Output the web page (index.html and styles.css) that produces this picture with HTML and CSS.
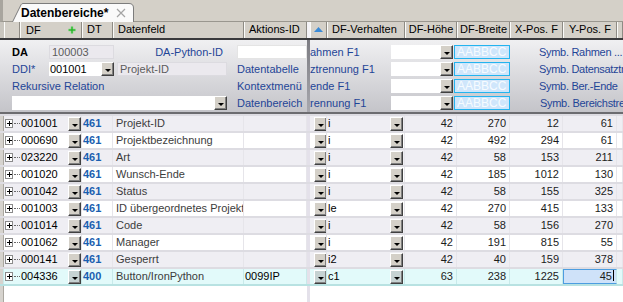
FILE: index.html
```html
<!DOCTYPE html>
<html>
  <head>
    <title>Datenbereiche</title>
    <link rel="stylesheet" href="styles.css">
  </head>
  <body>
    <div class="tabbar">
      <div class="tab">
        <svg class="tab-shape" width="123" height="19" viewBox="0 0 123 19">
          <path d="M0.5 19 L9 1.8 Q9.6 0.5 11 0.5 L117 0.5 Q121.5 0.5 121.5 5 L121.5 19" fill="#fafafa" stroke="#7c7c7c"/>
        </svg>
        <span class="tab-title">Datenbereiche*</span>
        <svg class="tab-close" width="10" height="10" viewBox="0 0 10 10">
          <path d="M1 1 L9 9 M9 1 L1 9" stroke="#a4a4a4" stroke-width="1.2"/>
        </svg>
      </div>
    </div>

    <div class="ghead">
      <div class="h gut"></div>
      <div class="h"></div>
      <div class="h hdf"><span class="htxt">DF</span><svg class="plus" width="8" height="8" viewBox="0 0 8 8"><path d="M3 0.5 H5 V3 H7.5 V5 H5 V7.5 H3 V5 H0.5 V3 H3 Z" fill="#2fb52f" stroke="#8fd88f" stroke-width="0.6"/></svg></div>
      <div class="h hpad">DT</div>
      <div class="h hpad">Datenfeld</div>
      <div class="h hpad">Aktions-ID</div>
      <div class="h split"></div>
      <div class="h sort">
        <svg width="9" height="5" viewBox="0 0 9 5"><path d="M0 5 L4.5 0 L9 5 Z" fill="#3a8ad6"/></svg>
      </div>
      <div class="h hpad">DF-Verhalten</div>
      <div class="h hc">DF-Höhe</div>
      <div class="h hc">DF-Breite</div>
      <div class="h hc">X-Pos. F</div>
      <div class="h hc">Y-Pos. F</div>
      <div class="h"></div>
    </div>

    <div class="form">
      <div class="fl">
        <div class="lbl bold c2">DA</div>
        <div class="box c3">100003</div>
        <div class="lbl blue c5 right">DA-Python-ID</div>
        <div class="inp c7"></div>

        <div class="lbl blue c2">DDI*</div>
        <div class="combo c3"><span class="val dark">001001</span><i class="dd"></i></div>
        <div class="box c5">Projekt-ID</div>
        <div class="lbl blue c7">Datentabelle</div>

        <div class="lbl blue c2-5">Rekursive Relation</div>
        <div class="lbl blue c7">Kontextmenü</div>

        <div class="combo c2-5"><span class="val"></span><i class="dd"></i></div>
        <div class="lbl blue c7">Datenbereich</div>
      </div>
      <div class="fsplit"></div>
      <div class="fr">
        <div class="lbl blue">ahmen F1</div>
        <div class="combo"><span class="val"></span><i class="dd"></i></div>
        <div class="color">AABBCC</div>
        <div class="lbl blue sym">Symb. Rahmen ...</div>

        <div class="lbl blue">ztrennung F1</div>
        <div class="combo"><span class="val"></span><i class="dd"></i></div>
        <div class="color">AABBCC</div>
        <div class="lbl blue sym">Symb. Datensatztrennung</div>

        <div class="lbl blue">ende F1</div>
        <div class="combo"><span class="val"></span><i class="dd"></i></div>
        <div class="color">AABBCC</div>
        <div class="lbl blue sym">Symb. Ber.-Ende</div>

        <div class="lbl blue shift">trennung F1</div>
        <div class="combo"><span class="val"></span><i class="dd"></i></div>
        <div class="color">AABBCC</div>
        <div class="lbl blue sym sym4">Symb. Bereichstrennung</div>
      </div>
    </div>

    <div class="rows">
      <div class="row odd">
        <div class="c gut"></div><div class="c tree"><span class="exp"></span></div>
        <div class="c df">001001</div><div class="c bc"><i class="dd"></i></div>
        <div class="c dt">461</div><div class="c name">Projekt-ID</div><div class="c act"></div>
        <div class="c split"></div><div class="c bc2"><i class="dd"></i></div>
        <div class="c verh"><span>i</span><i class="dd"></i></div>
        <div class="c num">42</div><div class="c num">270</div><div class="c num">12</div><div class="c num">61</div><div class="c"></div>
      </div>
      <div class="row">
        <div class="c gut"></div><div class="c tree"><span class="exp"></span></div>
        <div class="c df">000690</div><div class="c bc"><i class="dd"></i></div>
        <div class="c dt">461</div><div class="c name">Projektbezeichnung</div><div class="c act"></div>
        <div class="c split"></div><div class="c bc2"><i class="dd"></i></div>
        <div class="c verh"><span>i</span><i class="dd"></i></div>
        <div class="c num">42</div><div class="c num">492</div><div class="c num">294</div><div class="c num">61</div><div class="c"></div>
      </div>
      <div class="row odd">
        <div class="c gut"></div><div class="c tree"><span class="exp"></span></div>
        <div class="c df">023220</div><div class="c bc"><i class="dd"></i></div>
        <div class="c dt">461</div><div class="c name">Art</div><div class="c act"></div>
        <div class="c split"></div><div class="c bc2"><i class="dd"></i></div>
        <div class="c verh"><span>i</span><i class="dd"></i></div>
        <div class="c num">42</div><div class="c num">58</div><div class="c num">153</div><div class="c num">211</div><div class="c"></div>
      </div>
      <div class="row">
        <div class="c gut"></div><div class="c tree"><span class="exp"></span></div>
        <div class="c df">001020</div><div class="c bc"><i class="dd"></i></div>
        <div class="c dt">461</div><div class="c name">Wunsch-Ende</div><div class="c act"></div>
        <div class="c split"></div><div class="c bc2"><i class="dd"></i></div>
        <div class="c verh"><span>i</span><i class="dd"></i></div>
        <div class="c num">42</div><div class="c num">185</div><div class="c num">1012</div><div class="c num">130</div><div class="c"></div>
      </div>
      <div class="row odd">
        <div class="c gut"></div><div class="c tree"><span class="exp"></span></div>
        <div class="c df">001042</div><div class="c bc"><i class="dd"></i></div>
        <div class="c dt">461</div><div class="c name">Status</div><div class="c act"></div>
        <div class="c split"></div><div class="c bc2"><i class="dd"></i></div>
        <div class="c verh"><span>i</span><i class="dd"></i></div>
        <div class="c num">42</div><div class="c num">58</div><div class="c num">155</div><div class="c num">325</div><div class="c"></div>
      </div>
      <div class="row">
        <div class="c gut"></div><div class="c tree"><span class="exp"></span></div>
        <div class="c df">001003</div><div class="c bc"><i class="dd"></i></div>
        <div class="c dt">461</div><div class="c name">ID übergeordnetes Projekt</div><div class="c act"></div>
        <div class="c split"></div><div class="c bc2"><i class="dd"></i></div>
        <div class="c verh"><span>le</span><i class="dd"></i></div>
        <div class="c num">42</div><div class="c num">270</div><div class="c num">415</div><div class="c num">133</div><div class="c"></div>
      </div>
      <div class="row odd">
        <div class="c gut"></div><div class="c tree"><span class="exp"></span></div>
        <div class="c df">001014</div><div class="c bc"><i class="dd"></i></div>
        <div class="c dt">461</div><div class="c name">Code</div><div class="c act"></div>
        <div class="c split"></div><div class="c bc2"><i class="dd"></i></div>
        <div class="c verh"><span>i</span><i class="dd"></i></div>
        <div class="c num">42</div><div class="c num">58</div><div class="c num">156</div><div class="c num">270</div><div class="c"></div>
      </div>
      <div class="row">
        <div class="c gut"></div><div class="c tree"><span class="exp"></span></div>
        <div class="c df">001062</div><div class="c bc"><i class="dd"></i></div>
        <div class="c dt">461</div><div class="c name">Manager</div><div class="c act"></div>
        <div class="c split"></div><div class="c bc2"><i class="dd"></i></div>
        <div class="c verh"><span>i</span><i class="dd"></i></div>
        <div class="c num">42</div><div class="c num">191</div><div class="c num">815</div><div class="c num">55</div><div class="c"></div>
      </div>
      <div class="row odd">
        <div class="c gut"></div><div class="c tree"><span class="exp"></span></div>
        <div class="c df">000141</div><div class="c bc"><i class="dd"></i></div>
        <div class="c dt">461</div><div class="c name">Gesperrt</div><div class="c act"></div>
        <div class="c split"></div><div class="c bc2"><i class="dd"></i></div>
        <div class="c verh"><span>i2</span><i class="dd"></i></div>
        <div class="c num">42</div><div class="c num">40</div><div class="c num">159</div><div class="c num">378</div><div class="c"></div>
      </div>
      <div class="row current">
        <div class="c gut"></div><div class="c tree"><span class="exp"></span></div>
        <div class="c df">004336</div><div class="c bc"><i class="dd"></i></div>
        <div class="c dt">400</div><div class="c name">Button/IronPython</div><div class="c act">0099IP</div>
        <div class="c split"></div><div class="c bc2"><i class="dd"></i></div>
        <div class="c verh"><span>c1</span><i class="dd"></i></div>
        <div class="c num">63</div><div class="c num">238</div><div class="c num">1225</div><div class="c num edit">45<span class="caret"></span></div><div class="c"></div>
      </div>
    </div>

    <div class="filler">
      <div class="gut"></div>
      <div></div>
      <div class="split"></div>
      <div></div>
    </div>
  </body>
</html>
```

FILE: styles.css
```css
:root {
  --cols: 4px 16px 47px 15px 31px 131px 63px 3px 17px 78px 52px 53px 53px 54px 6px;
}

* {
  box-sizing: border-box;
}

body {
  margin: 0;
  width: 623px;
  height: 302px;
  overflow: hidden;
  display: flex;
  flex-direction: column;
  background: #fff;
  color: #000;
  font-family: "Liberation Sans", Arial, sans-serif;
  font-size: 11px;
}

/* tab strip */

.tabbar {
  flex: none;
  height: 22px;
  background: #d4d0c8;
  border-bottom: 1px solid #9a978f;
  border-left: 3px solid #a8a59e;
  display: flex;
  align-items: flex-end;
  padding-left: 9px;
}

.tab {
  position: relative;
  width: 123px;
  height: 19px;
  margin-bottom: -1px;
  display: flex;
  align-items: center;
  padding-left: 9px;
}

.tab-shape {
  position: absolute;
  left: 0;
  top: 0;
}

.tab-title {
  position: relative;
  font-size: 12px;
  font-weight: bold;
  padding-top: 1px;
}

.tab-close {
  position: relative;
  margin-left: 8px;
  margin-top: 1px;
}

/* column header */

.ghead {
  flex: none;
  height: 16px;
  display: grid;
  grid-template-columns: var(--cols);
  background: #d4d0c8;
}

.h {
  border-left: 1px solid #fbfbf9;
  border-right: 1px solid #8e8b84;
  line-height: 15px;
  white-space: nowrap;
  overflow: hidden;
}

.h.gut {
  border: 0;
  background: #c9c6bf;
}

.hpad {
  padding-left: 4px;
}

.hdf {
  grid-column: span 2;
  padding-left: 5px;
  padding-right: 5px;
  display: flex;
  align-items: center;
  justify-content: space-between;
}

.hc {
  text-align: center;
}

.h.split {
  background: #f4f3f6;
  border: 0;
}

.sort {
  display: flex;
  align-items: center;
  padding-left: 3px;
  padding-bottom: 2px;
}

/* form */

.form {
  flex: none;
  height: 76px;
  display: flex;
  border-top: 2px solid #3a3a3c;
  border-bottom: 2px solid #6c6c70;
  background: linear-gradient(#f0f0f2, #c4c4c9);
}

.fl {
  width: 307px;
  display: grid;
  grid-template-columns: 12px 37px 65px 3px 110px 10px 70px;
  grid-template-rows: repeat(4, 14px);
  row-gap: 3px;
  padding-top: 5px;
}

.fsplit {
  width: 3px;
  background: linear-gradient(#7c7c82, #a8a8ae);
}

.fr {
  flex: 1;
  display: grid;
  grid-template-columns: 81px 63px 56px 29px 1fr;
  grid-template-rows: repeat(4, 14px);
  row-gap: 3px;
  padding-top: 5px;
  overflow: hidden;
}

.c2 { grid-column: 2; }
.c3 { grid-column: 3; }
.c5 { grid-column: 5; }
.c7 { grid-column: 7; }
.c2-5 { grid-column: 2 / 6; }

.lbl {
  line-height: 14px;
  white-space: nowrap;
  overflow: hidden;
}

.bold {
  font-weight: bold;
}

.blue {
  color: #1f4597;
}

.right {
  text-align: right;
  padding-right: 4px;
}

.shift {
  margin-left: -3px;
}

.sym {
  grid-column: 5;
  letter-spacing: -0.3px;
}

.sym4 {
  padding-left: 1px;
}

.box {
  background: #ebe9ee;
  border: 1px solid #dcdbe0;
  color: #5c5c5c;
  line-height: 12px;
  padding-left: 2px;
}

.inp {
  background: #fff;
  border: 1px solid #e4e4e4;
}

.combo {
  display: flex;
  background: #fff;
}

.val {
  flex: 1;
  line-height: 14px;
  padding-left: 1px;
  color: #000;
}

.fr .combo {
  margin-right: 1px;
}

.color {
  background: #cfe6fb;
  border: 1px solid #24b4ef;
  color: #f6fbff;
  font-size: 12px;
  line-height: 12px;
  padding-left: 2px;
}

/* dropdown button */

.dd {
  display: block;
  position: relative;
  width: 13px;
  height: 14px;
  background: #d4d0c8;
  border: 1px solid;
  border-color: #fff #404040 #404040 #fff;
  box-shadow: inset -1px -1px #808080;
}

.dd::after {
  content: "";
  position: absolute;
  left: 3px;
  top: 6px;
  border-left: 3px solid transparent;
  border-right: 3px solid transparent;
  border-top: 3px solid #000;
}

/* data rows */

.rows {
  flex: none;
  border-top: 2px solid #dddce2;
}

.row {
  display: grid;
  grid-template-columns: var(--cols);
  height: 17px;
  border-bottom: 2px solid #dddce2;
  background: #fff;
}

.row.odd {
  background: #efeef3;
}

.c {
  border-right: 1px solid #e6e5ea;
  line-height: 15px;
  white-space: nowrap;
  overflow: hidden;
}

.c.gut,
.filler .gut {
  background: #d6d3ce;
  border-right: 1px solid #aaa7a0;
}

.tree {
  display: flex;
  align-items: center;
  border-right: 0;
}

.exp {
  position: relative;
  width: 9px;
  height: 9px;
  margin-left: 1px;
  border: 1px solid #8a8a8a;
  background: #fff;
}

.exp::before {
  content: "";
  position: absolute;
  left: 1px;
  top: 3px;
  width: 5px;
  height: 1px;
  background: #000;
}

.exp::after {
  content: "";
  position: absolute;
  left: 3px;
  top: 1px;
  width: 1px;
  height: 5px;
  background: #000;
}

.tree::after {
  content: "";
  width: 6px;
  margin-left: 1px;
  border-top: 1px dotted #6a6a6a;
}

.df {
  padding-left: 1px;
  border-right: 0;
}

.bc,
.bc2 {
  padding-top: 1px;
  padding-left: 1px;
}

.bc2 {
  padding-left: 4px;
}

.dt {
  color: #1a5fb0;
  font-weight: bold;
  padding-left: 1px;
}

.name {
  color: #3c3c3c;
  padding-left: 3px;
}

.act {
  padding-left: 1px;
}

.c.split,
.filler .split {
  background: #e4e1ea;
  border: 0;
}

.verh {
  display: flex;
  padding-top: 1px;
}

.verh span {
  flex: 1;
  line-height: 13px;
  padding-left: 1px;
}

.verh .dd {
  margin-right: 1px;
}

.num {
  text-align: right;
  padding-right: 3px;
  color: #1c1c1c;
}

.row.current {
  background: #e2fafa;
  border-bottom-color: #b8e2e2;
}

.row.current .c {
  border-right-color: #c8eaea;
}

.row.current .dd {
  background: #c6d2d2;
}

.row.current .gut {
  background: #d6d3ce;
}

.num.edit {
  background: #cfe2f9;
  border: 1px solid #4d9de0;
  line-height: 13px;
  padding-right: 2px;
}

.caret {
  display: inline-block;
  width: 1px;
  height: 11px;
  margin-left: 1px;
  background: #000;
  vertical-align: -1px;
}

.filler {
  flex: 1;
  display: grid;
  grid-template-columns: 4px 303px 3px 1fr;
  background: #fff;
}
```
